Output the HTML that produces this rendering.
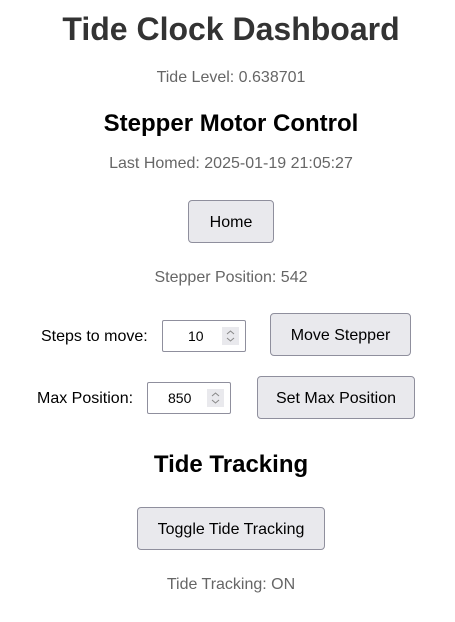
<!DOCTYPE html>
<html><head><meta charset="utf-8"><style>
*{margin:0;padding:0;box-sizing:border-box}
body{width:455px;height:622px;background:#fff;font-family:"Liberation Sans",Arial,sans-serif;position:relative;overflow:hidden}
.c{position:absolute;left:0;width:462px;text-align:center;white-space:nowrap}
.t{position:absolute;white-space:nowrap}
.g{color:#666;font-size:16px}
.btn{position:absolute;background:#e9e9ed;border:1px solid #8f8f9d;border-radius:4px;font-size:16px;color:#000;display:flex;align-items:center;justify-content:center;white-space:nowrap;padding-top:3px}
.inp{position:absolute;border:1px solid #8f8f9d;border-radius:2px;background:#fff;font-size:14px}
.inp span{position:absolute;top:0;bottom:0;display:flex;align-items:center}
.sp{position:absolute;top:6px;width:17px;height:18px;background:#e9e9ed}
</style></head><body>
<div class="c" style="top:11px;font-size:32px;font-weight:bold;color:#333;line-height:37px">Tide Clock Dashboard</div>
<div class="c g" style="top:69px;line-height:18px">Tide Level: 0.638701</div>
<div class="c" style="top:110px;font-size:24px;font-weight:bold;line-height:28px">Stepper Motor Control</div>
<div class="c g" style="top:155px;line-height:18px">Last Homed: 2025-01-19 21:05:27</div>
<div class="btn" style="left:188px;top:200px;width:86px;height:43px">Home</div>
<div class="c g" style="top:269px;line-height:18px">Stepper Position: 542</div>
<div class="t" style="left:41px;top:328px;font-size:16px;line-height:18px">Steps to move:</div>
<div class="inp" style="left:162px;top:320px;width:84px;height:32px"><span style="left:25px">10</span><svg class="sp" style="left:59px" viewBox="0 0 17 18"><path d="M5 7l3.5-3 3.5 3M5 11l3.5 3 3.5-3" fill="none" stroke="#888" stroke-width="1"/></svg></div>
<div class="btn" style="left:270px;top:313px;width:141px;height:43px">Move Stepper</div>
<div class="t" style="left:37px;top:390px;font-size:16px;line-height:18px">Max Position:</div>
<div class="inp" style="left:147px;top:382px;width:84px;height:32px"><span style="left:20px">850</span><svg class="sp" style="left:59px" viewBox="0 0 17 18"><path d="M5 7l3.5-3 3.5 3M5 11l3.5 3 3.5-3" fill="none" stroke="#888" stroke-width="1"/></svg></div>
<div class="btn" style="left:257px;top:376px;width:158px;height:43px">Set Max Position</div>
<div class="c" style="top:451px;font-size:24px;font-weight:bold;line-height:28px">Tide Tracking</div>
<div class="btn" style="left:137px;top:507px;width:188px;height:43px">Toggle Tide Tracking</div>
<div class="c g" style="top:576px;line-height:18px">Tide Tracking: ON</div>
</body></html>
